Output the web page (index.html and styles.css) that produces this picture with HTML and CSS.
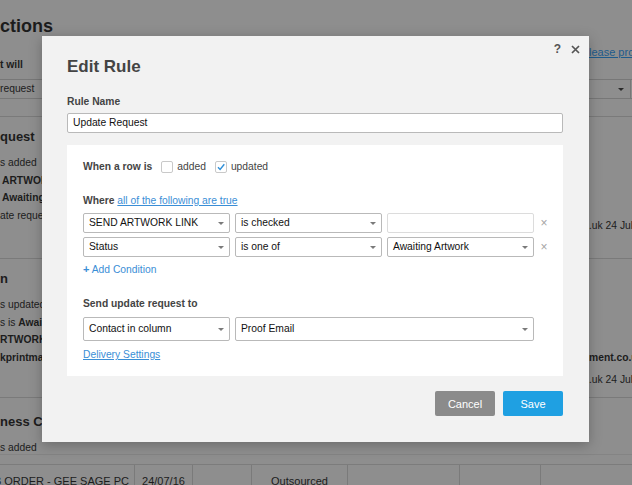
FILE: index.html
```html
<!DOCTYPE html>
<html>
<head>
<meta charset="utf-8">
<link rel="stylesheet" href="styles.css">
</head>
<body>
<div class="page">
  <div class="bg-row r-head">
    <div class="bg-l"><span class="h-big">ctions</span></div><div></div><div class="bg-r"></div>
  </div>
  <div class="bg-row r-will">
    <div class="bg-l"><b class="ln">t will</b></div><div></div><div class="bg-r"><a class="bg-link">lease pro</a></div>
  </div>
  <div class="bg-row r-sel">
    <div class="bg-l"><span class="ln">request</span></div><div></div><div class="bg-r"><div class="bg-select"><span class="caret dark"></span></div></div>
  </div>
  <div class="bg-row r-gap"><div></div><div></div><div></div></div>
  <div class="bg-row r-a">
    <div class="bg-l">
      <div class="h-mid">quest</div>
      <div class="lines">
        <div>s added</div>
        <div class="ind"><b>ARTWORK LINK</b></div>
        <div class="ind"><b>Awaiting Artwork</b></div>
        <div>ate request</div>
      </div>
    </div>
    <div></div>
    <div class="bg-r"><div class="rt1">.uk 24 July</div></div>
  </div>
  <div class="bg-row r-b">
    <div class="bg-l">
      <div class="h-mid">n</div>
      <div class="lines">
        <div>s updated</div>
        <div>s is <b>Awaiting</b></div>
        <div><b>RTWORK LINK</b></div>
        <div><b>kprintmanagement</b></div>
      </div>
    </div>
    <div></div>
    <div class="bg-r"><div class="rt2"><b>ment.co.u</b></div><div class="rt3">.uk 24 July</div></div>
  </div>
  <div class="bg-row r-c">
    <div class="bg-l">
      <div class="h-mid h-c">ness Ca</div>
      <div class="lines"><div>s added</div></div>
    </div>
    <div></div><div class="bg-r"></div>
  </div>
  <div class="band"></div>
  <div class="trow">
    <div class="td first"><span>JB ORDER - GEE SAGE PC</span></div>
    <div class="td">24/07/16</div>
    <div class="td"></div>
    <div class="td">Outsourced</div>
    <div class="td"></div>
    <div class="td"></div>
    <div class="td last"></div>
  </div>
</div>

<div class="modal">
  <div class="modal-tools">
    <span class="help">?</span>
    <svg class="close" width="9" height="9" viewBox="0 0 9 9"><path d="M1 1L8 8M8 1L1 8" stroke="#555" stroke-width="1.7" fill="none"/></svg>
  </div>
  <h1 class="title">Edit Rule</h1>
  <div class="label">Rule Name</div>
  <div class="text-input">Update Request</div>

  <div class="panel">
    <div class="when">
      <span class="label-inline">When a row is</span>
      <span class="check"></span><span class="opt">added</span>
      <span class="check on"><svg width="12" height="12" viewBox="0 0 12 12"><path d="M3 6.2L5.1 8.4L9.3 3.2" stroke="#2f8fd8" stroke-width="1.4" fill="none"/></svg></span><span class="opt">updated</span>
    </div>

    <div class="where"><span class="label-inline">Where</span> <a class="link">all of the following are true</a></div>

    <div class="cond-grid">
      <div class="sel">SEND ARTWORK LINK<span class="caret"></span></div>
      <div class="sel">is checked<span class="caret"></span></div>
      <div class="sel empty"></div>
      <div class="remove">×</div>

      <div class="sel">Status<span class="caret"></span></div>
      <div class="sel">is one of<span class="caret"></span></div>
      <div class="sel">Awaiting Artwork<span class="caret"></span></div>
      <div class="remove">×</div>
    </div>

    <div class="add"><span class="plus">+</span> Add Condition</div>

    <div class="send-label">Send update request to</div>
    <div class="send-grid">
      <div class="sel tall">Contact in column<span class="caret"></span></div>
      <div class="sel tall">Proof Email<span class="caret"></span></div>
    </div>
    <a class="link delivery">Delivery Settings</a>
  </div>

  <div class="actions">
    <button class="btn cancel">Cancel</button>
    <button class="btn save">Save</button>
  </div>
</div>
</body>
</html>
```

FILE: styles.css
```css
html, body {
  margin: 0;
  padding: 0;
}
body {
  width: 632px;
  height: 485px;
  overflow: hidden;
  background: #8e8e8e;
  font-family: "Liberation Sans", Arial, sans-serif;
  color: #1c1c1c;
  position: relative;
}

/* ---------- dimmed background page ---------- */
.page {
  width: 632px;
}
.bg-row {
  display: grid;
  grid-template-columns: 42px 547px 43px;
  box-sizing: border-box;
}
.bg-l, .bg-r {
  white-space: nowrap;
  font-size: 10.3px;
  line-height: 14px;
}
.bg-r {
  overflow: hidden;
}
.r-head { height: 45px; }
.h-big {
  display: block;
  padding-top: 16px;
  font-size: 18px;
  font-weight: bold;
  line-height: 20px;
}
.r-will { height: 34px; }
.r-will .ln { display: block; padding-top: 13px; }
.bg-link {
  display: block;
  font-size: 11px;
  line-height: 14px;
  color: #1e5b8c;
  text-decoration: underline;
}
.r-sel {
  height: 20px;
  border-top: 1px solid #777;
  border-bottom: 1px solid #777;
}
.r-sel .ln { display: block; line-height: 18px; }
.bg-select {
  height: 18px;
  border-right: 1px solid #777;
  margin-right: 1px;
  position: relative;
}
.r-gap {
  height: 18px;
  border-bottom: 1px solid #7a7a7a;
}
.r-a {
  height: 142px;
  border-bottom: 1px solid #7a7a7a;
}
.r-b {
  height: 139px;
  border-bottom: 1px solid #7a7a7a;
}
.r-c {
  height: 57px;
  border-bottom: 1px solid #848484;
}
.h-mid {
  padding-top: 12px;
  font-size: 13px;
  font-weight: bold;
  line-height: 16px;
}
.h-c { padding-top: 16px; }
.lines {
  margin-top: 9px;
}
.lines div {
  line-height: 17.7px;
}
.ind { padding-left: 2px; }
.rt1 { padding-top: 102px; }
.rt2 { padding-top: 92px; }
.rt3 { margin-top: 8px; }

.band {
  height: 9px;
  border-bottom: 1px solid #7c7c7c;
}
.trow {
  display: grid;
  grid-template-columns: 135px 58px 59px 96px 112px 81px 1fr;
  height: 21px;
}
.td {
  border-right: 1px solid #7a7a7a;
  font-size: 11px;
  line-height: 14px;
  padding-top: 9px;
  text-align: center;
  white-space: nowrap;
  overflow: hidden;
}
.td.first {
  display: flex;
  justify-content: flex-end;
  padding-right: 5px;
}
.td.first span { flex: none; }
.td.last { border-right: none; }

/* ---------- modal ---------- */
.modal {
  position: absolute;
  z-index: 10;
  left: 42px;
  top: 36px;
  width: 547px;
  height: 406px;
  box-sizing: border-box;
  background: #f2f2f2;
  padding: 21px 26px 0 25px;
  box-shadow: 0 3px 12px rgba(0, 0, 0, 0.25);
  color: #1a1a1a;
  font-size: 10.3px;
}
.modal-tools {
  position: absolute;
  top: 6px;
  right: 9px;
  display: flex;
  align-items: center;
  gap: 10px;
}
.help {
  font-size: 12px;
  font-weight: bold;
  color: #555;
  line-height: 14px;
}
.close { display: block; }
.title {
  margin: 0;
  font-size: 17px;
  line-height: 20px;
  font-weight: bold;
  color: #444;
}
.label {
  margin-top: 18px;
  font-weight: bold;
  color: #444;
  line-height: 14px;
}
.text-input {
  margin-top: 4px;
  height: 20px;
  box-sizing: border-box;
  background: #fff;
  border: 1px solid #b9b9b9;
  border-radius: 2px;
  padding-left: 5px;
  line-height: 18px;
  color: #111;
}
.panel {
  margin-top: 12px;
  background: #fff;
  padding: 15px 0 14px 16px;
}
.when {
  display: flex;
  align-items: center;
  height: 14px;
  line-height: 14px;
}
.label-inline {
  font-weight: bold;
  color: #444;
}
.when .label-inline { margin-right: 9px; }
.check {
  width: 12px;
  height: 12px;
  box-sizing: border-box;
  border: 1px solid #c9c9c9;
  border-radius: 2px;
  background: #fff;
  position: relative;
}
.check svg {
  position: absolute;
  left: -1px;
  top: -1px;
}
.opt {
  color: #444;
  margin-left: 4px;
  margin-right: 9px;
}
.where {
  margin-top: 20px;
  line-height: 14px;
}
.link {
  color: #3a8ed6;
  text-decoration: underline;
}
.cond-grid {
  margin-top: 5px;
  display: grid;
  grid-template-columns: 147px 147px 147px 10px;
  column-gap: 5px;
  row-gap: 4px;
}
.sel {
  position: relative;
  height: 20px;
  box-sizing: border-box;
  background: #fff;
  border: 1px solid #b9b9b9;
  border-radius: 2px;
  padding-left: 5px;
  line-height: 18px;
  color: #111;
  white-space: nowrap;
}
.sel.empty {
  border-color: #dcdcdc;
}
.sel.tall {
  height: 24px;
  line-height: 22px;
}
.caret {
  position: absolute;
  right: 5px;
  top: 50%;
  margin-top: -1px;
  width: 0;
  height: 0;
  border-left: 3px solid transparent;
  border-right: 3px solid transparent;
  border-top: 3px solid #7a7a7a;
}
.caret.dark {
  right: 6px;
  border-top-color: #2a2a2a;
}
.remove {
  color: #a5a5a5;
  font-size: 12px;
  line-height: 20px;
  text-align: center;
}
.add {
  margin-top: 5px;
  line-height: 14px;
  color: #3a8ed6;
}
.plus {
  font-weight: bold;
  font-size: 11px;
}
.send-label {
  margin-top: 20px;
  line-height: 14px;
  font-weight: bold;
  color: #444;
}
.send-grid {
  margin-top: 6px;
  display: grid;
  grid-template-columns: 147px 299px;
  column-gap: 5px;
}
.delivery {
  display: block;
  margin-top: 7px;
  line-height: 14px;
  width: max-content;
}
.actions {
  margin-top: 15px;
  display: flex;
  justify-content: flex-end;
  gap: 8px;
}
.btn {
  width: 60px;
  height: 25px;
  border: none;
  border-radius: 2px;
  color: #fff;
  font-family: "Liberation Sans", Arial, sans-serif;
  font-size: 11px;
  padding: 0;
}
.cancel { background: #8b8b8b; }
.save { background: #1fa0e2; }
```
